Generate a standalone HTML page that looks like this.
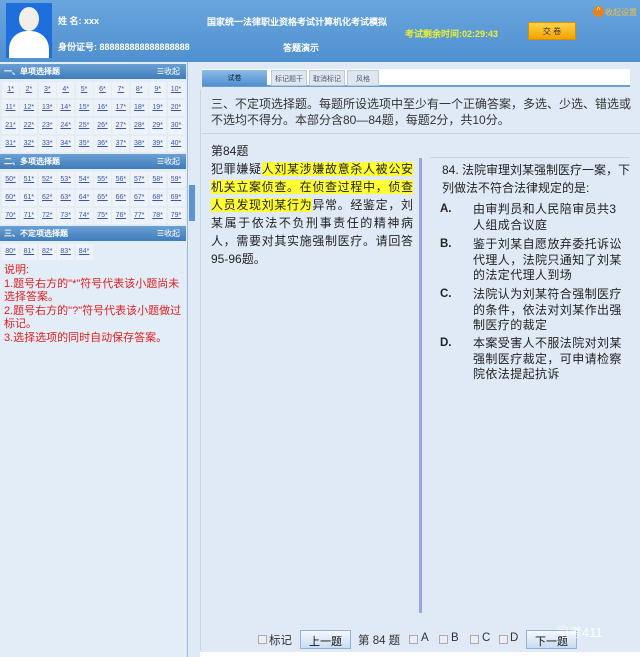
<!DOCTYPE html>
<html><head><meta charset="utf-8"><style>
*{margin:0;padding:0;box-sizing:border-box}
body{width:640px;height:657px;overflow:hidden;background:#dfeaf6;font-family:"Liberation Sans","Noto Sans CJK SC",sans-serif;position:relative}
.abs{position:absolute}
#hdr{left:0;top:0;width:640px;height:62px;background:linear-gradient(#6aa6de,#4f90d0)}
.ht{color:#fff;font-size:9px;font-weight:bold;font-family:"Liberation Sans","WenQuanYi Zen Hei",sans-serif}
#left{left:0;top:62px;width:188px;height:595px;background:#e3edf8;border-right:1px solid #9bbbe0}
.sh{position:absolute;left:0;width:186px;height:15px;background:linear-gradient(#6a9fd3,#3f7cbc);color:#fff;font-size:8px;font-weight:bold;padding:2px 4px;font-family:"Liberation Sans","WenQuanYi Zen Hei",sans-serif}
.sh span{position:absolute;right:6px;top:2px;font-weight:normal}
.grid{position:absolute;left:2px;width:184px}
.grid div{float:left;width:17px;height:16px;margin:0 1.4px 2px 0;background:#eef3fa;font-size:7px;color:#3a56a8;text-decoration:underline;padding-top:4px;text-align:center}
.red{left:4px;top:264px;width:179px;color:#e02020;font-size:11px;line-height:13.5px}
.tab{position:absolute;top:70px;height:16px;font-size:7px;color:#556;text-align:center;padding-top:3px}
.q{font-size:12px;color:#222;line-height:18px}
.hl{background:#ffff33}
.opt{position:absolute;left:440px;width:190px;font-size:12px;line-height:15.5px;color:#222}
.opt b{position:absolute;left:0;font-size:11.5px}
.opt p{margin-left:33px;width:151px;letter-spacing:0.4px}
.btn{position:absolute;top:630px;height:19px;border:1px solid #8fb2de;background:linear-gradient(#f4f8fd,#c9dcf2);font-size:11px;text-align:center;padding-top:2px;color:#111}
.cb{position:absolute;top:635px;width:9px;height:9px;border:1px solid #aab;background:#eee}
.bt{position:absolute;top:632px;font-size:11.5px;color:#333}
</style></head><body>
<div id="hdr" class="abs"></div>
<div class="abs" style="left:6px;top:3px;width:46px;height:55px;background:#1e6fdc;overflow:hidden">
<div class="abs" style="left:13px;top:4px;width:20px;height:24px;border-radius:50%;background:#f3efe8"></div>
<div class="abs" style="left:3px;top:28px;width:40px;height:30px;border-radius:18px 18px 0 0;background:#fff"></div></div>
<div class="abs ht" style="left:58px;top:14px">姓 名: xxx</div>
<div class="abs ht" style="left:58px;top:40px">身份证号: 888888888888888888</div>
<div class="abs ht" style="left:207px;top:15px">国家统一法律职业资格考试计算机化考试模拟</div>
<div class="abs ht" style="left:283px;top:41px">答题演示</div>
<div class="abs ht" style="left:405px;top:27px;color:#e8f030">考试剩余时间:02:29:43</div>
<div class="abs" style="left:528px;top:22px;width:48px;height:18px;background:linear-gradient(#ffd24a,#f2a200);border:1px solid #d98f00;font-size:8px;text-align:center;padding-top:3px;color:#333">交 卷</div>
<div class="abs" style="left:593px;top:6px;width:11px;height:11px;border-radius:50%;background:#e9821c;color:#fff;font-size:8px;text-align:center;line-height:10px">^</div>
<div class="abs" style="left:605px;top:7px;color:#f5c23a;font-size:8px">收起设置</div>

<div id="left" class="abs">
<div class="sh" style="top:2px">一、单项选择题<span>☰收起</span></div>
<div class="grid" style="top:20px">
<div>1*</div><div>2*</div><div>3*</div><div>4*</div><div>5*</div><div>6*</div><div>7*</div><div>8*</div><div>9*</div><div>10*</div>
<div>11*</div><div>12*</div><div>13*</div><div>14*</div><div>15*</div><div>16*</div><div>17*</div><div>18*</div><div>19*</div><div>20*</div>
<div>21*</div><div>22*</div><div>23*</div><div>24*</div><div>25*</div><div>26*</div><div>27*</div><div>28*</div><div>29*</div><div>30*</div>
<div>31*</div><div>32*</div><div>33*</div><div>34*</div><div>35*</div><div>36*</div><div>37*</div><div>38*</div><div>39*</div><div>40*</div></div>
<div class="sh" style="top:92px">二、多项选择题<span>☰收起</span></div>
<div class="grid" style="top:110px">
<div>50*</div><div>51*</div><div>52*</div><div>53*</div><div>54*</div><div>55*</div><div>56*</div><div>57*</div><div>58*</div><div>59*</div>
<div>60*</div><div>61*</div><div>62*</div><div>63*</div><div>64*</div><div>65*</div><div>66*</div><div>67*</div><div>68*</div><div>69*</div>
<div>70*</div><div>71*</div><div>72*</div><div>73*</div><div>74*</div><div>75*</div><div>76*</div><div>77*</div><div>78*</div><div>79*</div></div>
<div class="sh" style="top:164px">三、不定项选择题<span>☰收起</span></div>
<div class="grid" style="top:182px">
<div>80*</div><div>81*</div><div>82*</div><div>83*</div><div>84*</div></div>
</div>
<div class="abs red">说明:<br>1.题号右方的"*"符号代表该小题尚未选择答案。<br>2.题号右方的"?"符号代表该小题做过标记。<br>3.选择选项的同时自动保存答案。</div>
<div class="abs" style="left:189px;top:185px;width:6px;height:36px;background:#5b95d4"></div>

<div class="abs" style="left:202px;top:69px;width:428px;height:18px;background:#fff;border-bottom:2px solid #6aa0d6"></div>
<div class="tab" style="left:202px;width:65px;background:linear-gradient(#8cbbe6,#4f8fcf);color:#123">试卷</div>
<div class="tab" style="left:271px;width:36px;background:#dde7f3;border:1px solid #bcc">标记题干</div>
<div class="tab" style="left:309px;width:36px;background:#dde7f3;border:1px solid #bcc">取消标记</div>
<div class="tab" style="left:347px;width:32px;background:#dde7f3;border:1px solid #bcc">风格</div>

<div class="abs" style="left:211px;top:96px;width:428px;font-size:12px;line-height:16px;color:#333">三、不定项选择题。每题所设选项中至少有一个正确答案，多选、少选、错选或不选均不得分。本部分含80—84题，每题2分，共10分。</div>
<div class="abs" style="left:202px;top:133px;width:438px;height:1px;background:#c5d4e4"></div>
<div class="abs" style="left:200px;top:90px;width:1px;height:560px;background:#c5d4e4"></div>
<div class="abs q" style="left:211px;top:142px">第84题</div>
<div class="abs q" style="left:211px;top:160px;width:202px;text-align:justify">犯罪嫌疑<span class="hl">人刘某涉嫌故意杀人被公安机关立案侦查。在侦查过程中，侦查人员发现刘某行为</span>异常。经鉴定，刘某属于依法不负刑事责任的精神病人，需要对其实施强制医疗。请回答95-96题。</div>
<div class="abs" style="left:419px;top:158px;width:3px;height:455px;background:#9aa6e6"></div>
<div class="abs" style="left:430px;top:157px;width:200px;height:1px;background:#c5d4e4"></div>
<div class="abs q" style="left:442px;top:161px;width:192px">84. 法院审理刘某强制医疗一案，下列做法不符合法律规定的是:</div>
<div class="opt" style="top:202px"><b>A.</b><p>由审判员和人民陪审员共3人组成合议庭</p></div>
<div class="opt" style="top:237px"><b>B.</b><p>鉴于刘某自愿放弃委托诉讼代理人，法院只通知了刘某的法定代理人到场</p></div>
<div class="opt" style="top:287px"><b>C.</b><p>法院认为刘某符合强制医疗的条件，依法对刘某作出强制医疗的裁定</p></div>
<div class="opt" style="top:336px"><b>D.</b><p>本案受害人不服法院对刘某强制医疗裁定，可申请检察院依法提起抗诉</p></div>

<div class="cb" style="left:258px"></div><div class="bt" style="left:269px">标记</div>
<div class="btn" style="left:300px;width:51px">上一题</div>
<div class="bt" style="left:358px">第 84 题</div>
<div class="cb" style="left:409px"></div><div class="bt" style="left:421px">A</div>
<div class="cb" style="left:439px"></div><div class="bt" style="left:451px">B</div>
<div class="cb" style="left:470px"></div><div class="bt" style="left:482px">C</div>
<div class="cb" style="left:499px"></div><div class="bt" style="left:510px">D</div>
<div class="btn" style="left:526px;width:51px">下一题</div>
<div class="abs" style="left:556px;top:622px;font-size:13px;color:#fff;opacity:.85">司考411</div>
<div class="abs" style="left:200px;top:652px;width:440px;height:5px;background:#fff"></div>
</body></html>
